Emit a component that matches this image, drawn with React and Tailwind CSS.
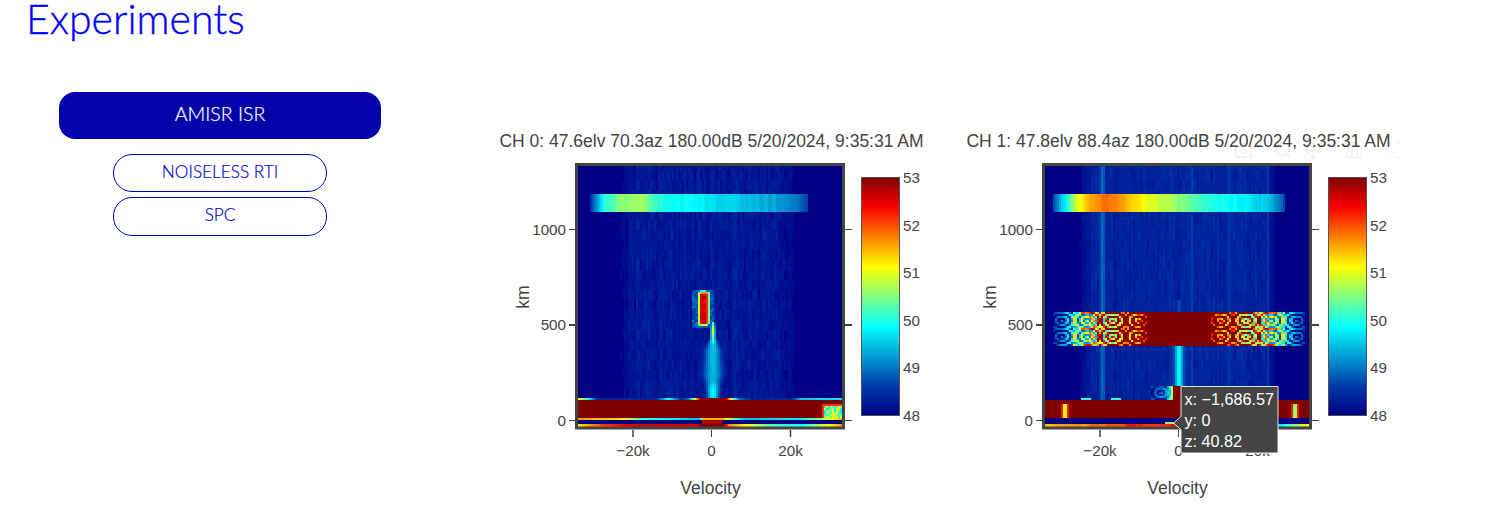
import React, { useMemo } from 'react';
import { Camera, Search, Move, House, Scan } from 'lucide-react';

const STOPS = [
  [0, 0, 0, 131],
  [0.125, 0, 60, 170],
  [0.375, 5, 255, 255],
  [0.625, 255, 255, 0],
  [0.875, 250, 0, 0],
  [1, 128, 0, 0],
];

const LEVELS = 96;

function jet(t) {
  const v = Math.min(1, Math.max(0, t));
  for (let i = 1; i < STOPS.length; i++) {
    if (v <= STOPS[i][0]) {
      const a = STOPS[i - 1];
      const b = STOPS[i];
      const k = (v - a[0]) / (b[0] - a[0]);
      const c = [1, 2, 3].map((n) => Math.round(a[n] + (b[n] - a[n]) * k));
      return `rgb(${c[0]},${c[1]},${c[2]})`;
    }
  }
  return 'rgb(128,0,0)';
}

function hash(i, j) {
  const s = Math.sin(i * 12.9898 + j * 78.233) * 43758.5453;
  return s - Math.floor(s);
}

// piecewise linear profile, pts are [x, value]
function lerp(pts, x) {
  if (x <= pts[0][0]) return pts[0][1];
  for (let i = 1; i < pts.length; i++) {
    if (x <= pts[i][0]) {
      const k = (x - pts[i - 1][0]) / (pts[i][0] - pts[i - 1][0]);
      return pts[i - 1][1] + (pts[i][1] - pts[i - 1][1]) * k;
    }
  }
  return pts[pts.length - 1][1];
}

function colNoise(x, y, seed) {
  const c = Math.floor(x / 2);
  const r = Math.floor(y / 10);
  return hash(c + seed, r) * 0.55 + hash(c + seed, 7) * 0.45;
}

function inRange(v, a, b) {
  return v >= a && v < b;
}

const BAND_A = [[590, 0.1], [597, 0.28], [604, 0.41], [620, 0.5], [640, 0.53], [650, 0.46], [662, 0.39], [690, 0.37], [720, 0.32], [750, 0.29], [780, 0.25], [798, 0.18], [808, 0.1]];
const BAND_B = [[1053, 0.14], [1060, 0.3], [1066, 0.38], [1076, 0.6], [1090, 0.7], [1105, 0.77], [1120, 0.72], [1135, 0.66], [1160, 0.56], [1190, 0.47], [1205, 0.4], [1240, 0.36], [1265, 0.3], [1278, 0.22], [1285, 0.12]];

const LINE_A = [[578, 0.72], [620, 0.66], [640, 0.42], [698, 0.3], [702, 0.7], [722, 0.7], [742, 0.3], [800, 0.35], [843, 0.72]];
const FLOOR_A = [[578, 0.65], [600, 0.8], [640, 0.92], [695, 0.9], [700, 1], [722, 1], [728, 0.75], [770, 0.45], [800, 0.38], [825, 0.6], [843, 0.75]];
const TOP_EDGE_A = [[578, 0.62], [583, 0.5], [590, 0.3], [596, 0.08], [655, 0.08], [668, 0.4], [680, 0.08], [688, 0.2], [694, 0.6], [700, 1], [724, 1], [730, 0.6], [738, 0.2], [750, 0.08], [790, 0.08], [800, 0.3], [843, 0.35]];
const FLOOR_B = [[1045, 0.72], [1170, 0.86], [1280, 0.35], [1295, 0.5], [1311, 0.72]];

function valueA(x, y) {
  if (y >= 424) return lerp(FLOOR_A, x);
  if (inRange(y, 420, 424)) return Math.abs(x - 711) < 11 ? 0.95 : 0;
  if (inRange(y, 418, 420)) return lerp(LINE_A, x);
  if (inRange(y, 400, 418)) {
    if (inRange(x, 824, 841) && inRange(y, 405, 417)) {
      return 0.32 + 0.32 * hash(Math.floor(x / 2), Math.floor(y / 2));
    }
    if (inRange(x, 821, 843) && inRange(y, 403, 418)) return 0.82;
    return 1;
  }
  if (inRange(y, 398, 400)) return lerp(TOP_EDGE_A, x);
  const win = lerp([[615, 0], [632, 1], [780, 1], [798, 0]], x);
  let t = win * (0.012 + 0.075 * colNoise(x, y, 11));
  if (inRange(y, 194, 212) && inRange(x, 590, 808)) {
    return lerp(BAND_A, x) + 0.03 * (hash(Math.floor(x / 4), 2) - 0.5);
  }
  // hot block
  const dx = Math.max(0, 700.5 - x, x - 705);
  const dy = Math.max(0, 294 - y, y - 322);
  const d = Math.hypot(dx, dy);
  if (d < 3.6) return Math.max(t, 1 - d * 0.17 - (d > 0 ? 0 : 0.12 * hash(3, Math.floor(y / 4))));
  if (inRange(x, 692, 714) && inRange(y, 289, 327)) {
    t = Math.max(t, 0.11 + 0.09 * hash(Math.floor(x / 2), Math.floor(y / 2)));
  }
  // plume
  if (inRange(y, 322, 398)) {
    const w = lerp([[322, 1.8], [338, 2.4], [350, 8], [375, 10], [385, 6.5], [398, 5.5]], y);
    const peak = lerp([[322, 0.42], [330, 0.6], [338, 0.45], [345, 0.3], [380, 0.28], [390, 0.38], [398, 0.36]], y);
    const g = Math.abs(x - 712) / w;
    t = Math.max(t, peak * Math.exp(-g * g * 0.9));
  }
  return t;
}

function rings(x, y) {
  const dx = Math.abs(x - 1178.3);
  const cx = Math.max(0, Math.round((dx - 41) / 25.5)) * 25.5 + 41;
  const cy = y < 328 ? 320 : 336;
  const r = Math.hypot(dx - cx, (y - cy) * 1.45);
  const base = lerp([[0, 1.7], [26, 1.35], [41, 1.05], [66, 0.78], [92, 0.46], [117, 0.13], [128, 0.02]], dx);
  const edge = dx < 106 && (Math.abs(dx - cx) > 10.5 || Math.abs(y - cy) > 7) ? 0.18 : 0;
  const amp = lerp([[40, 0.42], [90, 0.28], [125, 0.1]], dx);
  return base + edge + amp * Math.cos(r * 1.05);
}

function valueB(x, y) {
  if (y >= 424) return lerp(FLOOR_B, x) + 0.1 * (hash(Math.floor(x / 9), 5) - 0.5);
  if (inRange(y, 420, 424)) return inRange(x, 1165, 1185) && y > 422 ? 0.5 : 0;
  if (inRange(y, 418, 420)) return 0;
  if (inRange(y, 400, 418)) {
    if (inRange(x, 1063, 1067) && inRange(y, 404, 417)) return 0.62;
    if (inRange(x, 1061, 1069) && inRange(y, 404, 417)) return 0.85;
    if (inRange(x, 1293, 1297) && inRange(y, 404, 417)) return 0.52;
    if (inRange(x, 1291, 1299) && inRange(y, 404, 417)) return 0.85;
    return 1;
  }
  if (inRange(y, 398, 400) && (inRange(x, 1080, 1090) || inRange(x, 1110, 1120))) return 0.42;
  const win = lerp([[1076, 0], [1092, 1], [1262, 1], [1278, 0]], x);
  let t = win * (0.05 + 0.05 * colNoise(x, y, 40));
  t = Math.max(t, 0.18 * Math.exp(-((x - 1101.5) ** 2) / 14));
  t = Math.max(t, 0.13 * Math.exp(-((x - 1191) ** 2) / 4));
  t = Math.max(t, 0.13 * Math.exp(-((x - 1228) ** 2) / 4));
  t = Math.max(t, 0.11 * Math.exp(-((x - 1267) ** 2) / 4));
  if (inRange(y, 194, 212) && inRange(x, 1053, 1285)) {
    return lerp(BAND_B, x) + 0.03 * (hash(Math.floor(x / 4), 2) - 0.5);
  }
  if (inRange(y, 311, 345) && inRange(x, 1053, 1304)) {
    return rings(x, y);
  }
  if (inRange(y, 345, 385)) {
    const g = Math.abs(x - 1178) / 4.2;
    t = Math.max(t, 0.38 * Math.exp(-g * g * 0.8), 0.2 * Math.exp(-((x - 1178) ** 2) / 80));
  }
  if (inRange(y, 300, 311)) {
    t = Math.max(t, 0.14 * Math.exp(-((x - 1178) ** 2) / 14));
  }
  if (inRange(y, 385, 400)) {
    if (inRange(x, 1172, 1200)) return 1;
    if (inRange(x, 1150, 1172)) {
      const r = Math.hypot(x - 1160, (y - 392) * 1.3);
      return lerp([[1150, 0.07], [1165, 0.18], [1172, 0.55]], x) + 0.09 * Math.cos(r * 1.05);
    }
  }
  return t;
}

// merges the cells into one path per colour level, much lighter than a rect per cell
function buildPaths(fn, offset) {
  const byLevel = {};
  for (let y = 162; y < 430; y += 2) {
    for (let x = 574; x < 846; x += 2) {
      const v = fn(x + offset, y + 0.5);
      const level = Math.round(Math.min(1, Math.max(0, v)) * LEVELS);
      byLevel[level] = (byLevel[level] || '') + `M${x} ${y}h2.05v2.05h-2.05z`;
    }
  }
  return Object.keys(byLevel).map((level) => ({ level: Number(level), d: byLevel[level] }));
}

function Heatmap({ fn, offset, id }) {
  const paths = useMemo(() => buildPaths(fn, offset), [fn, offset]);
  return (
    <g clipPath={`url(#clip-${id})`}>
      <g filter={`url(#soft-${id})`}>
        {paths.map((p) => (
          <path key={p.level} d={p.d} fill={jet(p.level / LEVELS)} />
        ))}
      </g>
    </g>
  );
}

const CB_TICKS = [
  ['53', 183],
  ['52', 231],
  ['51', 278],
  ['50', 326],
  ['49', 373],
  ['48', 421],
];

function Plot({ id, title, fn, offset, children }) {
  const tickClass = 'fill-[#444] text-[15.2px]';
  return (
    <svg width="467" height="400" viewBox="466 110 467 400" className="block shrink-0 [font-family:'Liberation_Sans',sans-serif]">
      <defs>
        <clipPath id={`clip-${id}`}>
          <rect x="576" y="164" width="268" height="264" />
        </clipPath>
        <filter id={`soft-${id}`} x="-2%" y="-2%" width="104%" height="104%">
          <feGaussianBlur stdDeviation="0.7" />
        </filter>
        <linearGradient id={`bar-${id}`} x1="0" y1="1" x2="0" y2="0">
          {STOPS.map((s) => (
            <stop key={s[0]} offset={s[0]} stopColor={`rgb(${s[1]},${s[2]},${s[3]})`} />
          ))}
        </linearGradient>
      </defs>

      <text x="711.5" y="146.5" textAnchor="middle" className="fill-[#444] text-[17.5px]">{title}</text>

      <Heatmap fn={fn} offset={offset} id={id} />
      <rect x="576.5" y="164.5" width="267" height="263.5" fill="none" stroke="#444" strokeWidth="3" />

      {/* y ticks, both sides */}
      <path d="M569 229.5h6M845 229.5h7M569 420.5h6M845 420.5h7" stroke="#444" strokeWidth="1" />
      <path d="M569 325h6M845 325h7" stroke="#444" strokeWidth="2" />
      <path d="M633 430v7M790.5 430v7" stroke="#444" strokeWidth="1.5" />
      <path d="M711.5 430v7" stroke="#444" strokeWidth="1" />

      <text x="566" y="235" textAnchor="end" className={tickClass}>1000</text>
      <text x="566" y="330" textAnchor="end" className={tickClass}>500</text>
      <text x="566" y="425.5" textAnchor="end" className={tickClass}>0</text>
      <text x="633" y="455.5" textAnchor="middle" className={tickClass}>−20k</text>
      <text x="711.5" y="455.5" textAnchor="middle" className={tickClass}>0</text>
      <text x="790.5" y="455.5" textAnchor="middle" className={tickClass}>20k</text>

      <text x="710.5" y="494" textAnchor="middle" className="fill-[#444] text-[17.5px]">Velocity</text>
      <text transform="translate(529 297) rotate(-90)" textAnchor="middle" className="fill-[#444] text-[17.5px]">km</text>

      <rect x="861.5" y="177.5" width="38" height="238" fill={`url(#bar-${id})`} stroke="#444" strokeOpacity="0.85" strokeWidth="1" />
      {CB_TICKS.map(([label, y]) => (
        <text key={label} x="903" y={y} className={tickClass}>{label}</text>
      ))}

      {children}
    </svg>
  );
}

function Hover() {
  return (
    <g>
      <g className="text-[#444] opacity-[0.07]">
        <Camera x="767" y="141" width="19" height="19" />
        <Search x="807" y="141" width="19" height="19" />
        <Move x="837" y="141" width="19" height="19" />
        <House x="878" y="141" width="19" height="19" />
        <Scan x="917" y="141" width="19" height="19" />
      </g>
      <path
        d="M714 386.5H811V453H714V429.5L706.5 423L714 416.5Z"
        fill="#444"
        stroke="#fff"
        strokeOpacity="0.85"
        strokeWidth="1"
      />
      <g className="fill-white text-[16.2px]">
        <text x="717.5" y="405">x: −1,686.57</text>
        <text x="717.5" y="426">y: 0</text>
        <text x="717.5" y="447">z: 40.82</text>
      </g>
    </g>
  );
}

export default function App() {
  return (
    <div className="h-[524px] w-[1508px] overflow-hidden bg-white">
      <h1 className="pl-[26px] text-[41px] leading-[38px] font-light text-[#0000ff] [-webkit-text-stroke:0.35px_#0000ff] [font-family:Lato,sans-serif]">
        Experiments
      </h1>
      <div className="mt-[54px] flex items-start">
        <aside className="flex w-[466px] shrink-0 flex-col items-center pr-[85px] pl-[59px] [font-family:Lato,sans-serif]">
          <button className="h-[47px] w-[322px] rounded-[16px] bg-[#0404aa] pb-[3px] text-[19.5px] font-light text-white [-webkit-text-stroke:0.2px_#ffffff]">
            AMISR ISR
          </button>
          <button className="mt-[15px] h-[38px] w-[214px] rounded-[19px] border border-[#0404aa] pb-[3px] text-[17.2px] font-light text-[#0404cc] [-webkit-text-stroke:0.2px_#0404cc]">
            NOISELESS RTI
          </button>
          <button className="mt-[5px] h-[39px] w-[214px] rounded-[19px] border border-[#0404aa] pb-[3px] text-[17.2px] font-light text-[#0404cc] [-webkit-text-stroke:0.2px_#0404cc]">
            SPC
          </button>
        </aside>
        <div className="mt-[18px] flex">
          <Plot id="a" title="CH 0: 47.6elv 70.3az 180.00dB 5/20/2024, 9:35:31 AM" fn={valueA} offset={0} />
          <Plot id="b" title="CH 1: 47.8elv 88.4az 180.00dB 5/20/2024, 9:35:31 AM" fn={valueB} offset={467}>
            <Hover />
          </Plot>
        </div>
      </div>
    </div>
  );
}
